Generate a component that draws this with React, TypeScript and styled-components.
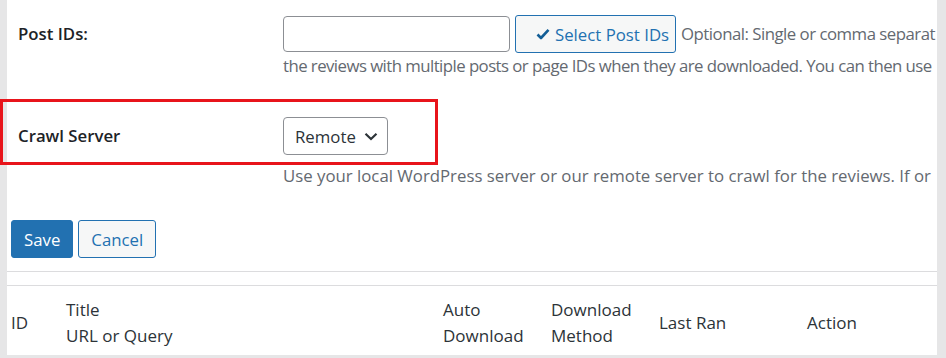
import styled, { createGlobalStyle } from "styled-components"

const GlobalStyle = createGlobalStyle`
  html, body {
    margin: 0;
    padding: 0;
    background: #e6e6e7;
  }
  body {
    font-family: "Open Sans", "Noto Sans", sans-serif;
    color: #1d2327;
  }
`

const Screen = styled.div`
  width: 946px;
  height: 358px;
  overflow: hidden;
  position: relative;
  background: #e6e6e7;
`

const Panel = styled.div`
  margin-left: 7px;
  width: 930px;
  height: 355px;
  overflow: hidden;
  background: #fff;
  display: flex;
  flex-direction: column;
  & > * {
    flex-shrink: 0;
  }
`

const FormRow = styled.div<{ $top: number; $height: number }>`
  display: grid;
  grid-template-columns: 276px 1fr;
  padding-top: ${(p) => p.$top}px;
  height: ${(p) => p.$height}px;
  box-sizing: border-box;
`

const Label = styled.div<{ $lh: number }>`
  padding-left: 11px;
  font-weight: 600;
  font-size: 16.8px;
  line-height: ${(p) => p.$lh}px;
  white-space: nowrap;
`

const Field = styled.div`
  display: flex;
  flex-direction: column;
  align-items: flex-start;
  min-width: 0;
`

const Inline = styled.div`
  display: flex;
  align-items: center;
  gap: 5px;
  white-space: nowrap;
  & > * {
    flex-shrink: 0;
  }
`

const TextInput = styled.input`
  width: 227px;
  height: 36px;
  box-sizing: border-box;
  border: 1px solid #8c8f94;
  border-radius: 4px;
  background: #fff;
  margin: 0;
`

const OutlineButton = styled.button`
  display: inline-flex;
  align-items: center;
  gap: 5px;
  width: 161px;
  height: 38px;
  padding: 0 0 0 20px;
  box-sizing: border-box;
  border: 1px solid #2271b1;
  border-radius: 3px;
  background: #f6f7f7;
  color: #2271b1;
  font-family: inherit;
  font-size: 16.8px;
  white-space: nowrap;
  cursor: pointer;
`

const Help = styled.span<{ $top?: number; $tight?: number }>`
  color: #646970;
  font-size: 16.8px;
  line-height: 24px;
  white-space: nowrap;
  letter-spacing: ${(p) => p.$tight ?? 0}px;
  margin-top: ${(p) => p.$top ?? 0}px;
`

const Select = styled.div`
  display: inline-flex;
  align-items: center;
  gap: 8px;
  width: 105px;
  height: 38px;
  box-sizing: border-box;
  padding: 0 0 0 11px;
  border: 1px solid #8c8f94;
  border-radius: 4px;
  font-size: 16.8px;
  color: #2c3338;
`

const Actions = styled.div`
  display: flex;
  gap: 5px;
  padding-left: 4px;
  height: 38px;
`

const Btn = styled.button<{ $primary?: boolean }>`
  height: 38px;
  padding: 0 12px;
  box-sizing: border-box;
  border: 1px solid #2271b1;
  border-radius: 3px;
  font-family: inherit;
  font-size: 16.8px;
  background: ${(p) => (p.$primary ? "#2271b1" : "#f6f7f7")};
  color: ${(p) => (p.$primary ? "#fff" : "#2271b1")};
  cursor: pointer;
`

const Divider = styled.div<{ $top: number }>`
  margin-top: ${(p) => p.$top}px;
  height: 1px;
  background: #dcdcde;
`

const Gap = styled.div`
  height: 13px;
`

const HeadRow = styled.div`
  display: grid;
  grid-template-columns: 55px 377px 108px 108px 148px 1fr;
  align-items: center;
  height: 70px;
  box-sizing: border-box;
  padding: 3px 0 0 4px;
  font-size: 17px;
  color: #2c3338;
`

const HeadCell = styled.div`
  line-height: 26px;
  white-space: nowrap;
`

const Highlight = styled.div`
  position: absolute;
  left: 0;
  top: 99px;
  width: 438px;
  height: 66px;
  box-sizing: border-box;
  border: 3px solid #e8141b;
  pointer-events: none;
`

const Check = () => (
  <svg width="14" height="12" viewBox="0 0 14 12" aria-hidden>
    <path d="M1.5 6.5 L5 10 L12.5 1.8" fill="none" stroke="#135e96" strokeWidth="2.6" strokeLinejoin="round" />
  </svg>
)

const Chevron = () => (
  <svg width="14" height="9" viewBox="0 0 14 9" aria-hidden>
    <path d="M1.5 1.8 L7 7 L12.5 1.8" fill="none" stroke="#2c3338" strokeWidth="2.2" />
  </svg>
)

export default function App() {
  return (
    <>
      <GlobalStyle />
      <Screen>
        <Panel>
          <FormRow $top={15} $height={99}>
            <Label $lh={38}>Post IDs:</Label>
            <Field>
              <Inline>
                <TextInput type="text" />
                <OutlineButton>
                  <Check />
                  Select Post IDs
                </OutlineButton>
                <Help $tight={-0.5}>Optional: Single or comma separat</Help>
              </Inline>
              <Help $top={1} $tight={-0.55}>
                the reviews with multiple posts or page IDs when they are downloaded. You can then use
              </Help>
            </Field>
          </FormRow>
          <FormRow $top={18} $height={121}>
            <Label $lh={38}>Crawl Server</Label>
            <Field>
              <Select>
                Remote
                <Chevron />
              </Select>
              <Help $top={9}>Use your local WordPress server or our remote server to crawl for the reviews. If or</Help>
            </Field>
          </FormRow>
          <Actions>
            <Btn $primary>Save</Btn>
            <Btn>Cancel</Btn>
          </Actions>
          <Divider $top={13} />
          <Gap />
          <Divider $top={0} />
          <HeadRow>
            <HeadCell>ID</HeadCell>
            <HeadCell>
              Title
              <br />
              URL or Query
            </HeadCell>
            <HeadCell>
              Auto
              <br />
              Download
            </HeadCell>
            <HeadCell>
              Download
              <br />
              Method
            </HeadCell>
            <HeadCell>Last Ran</HeadCell>
            <HeadCell>Action</HeadCell>
          </HeadRow>
        </Panel>
        <Highlight />
      </Screen>
    </>
  )
}
